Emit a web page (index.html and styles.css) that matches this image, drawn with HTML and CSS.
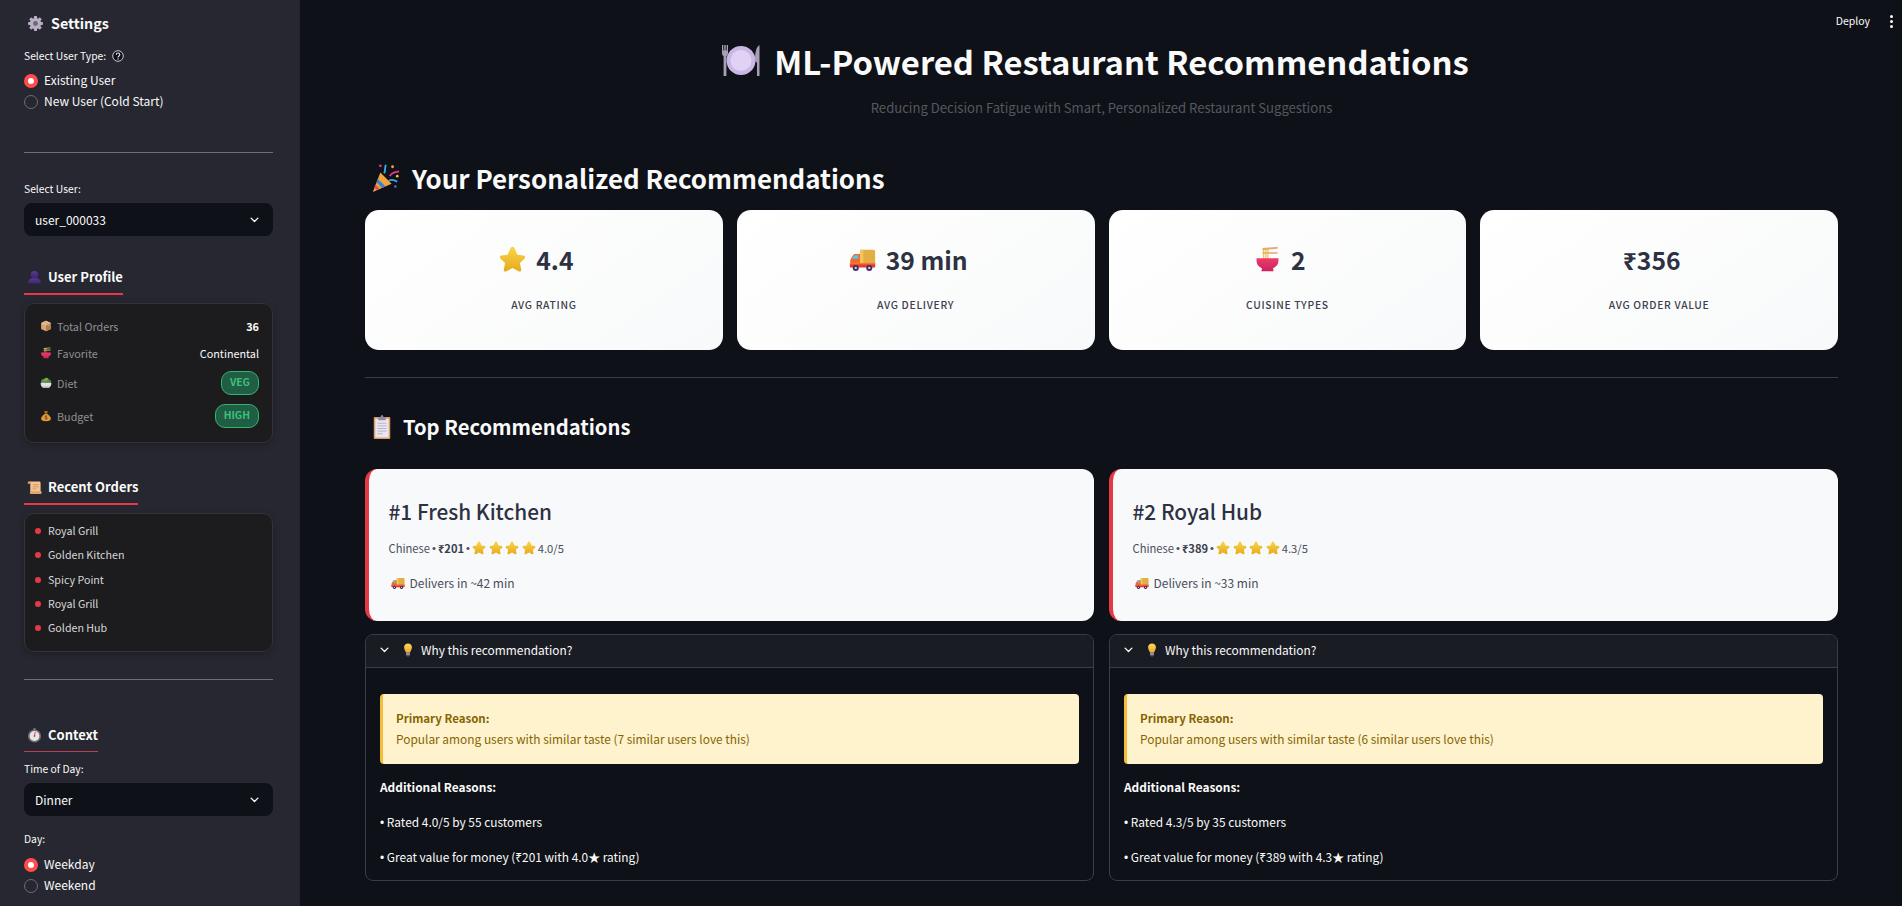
FILE: index.html
```html
<!DOCTYPE html>
<html lang="en">
<head>
<meta charset="utf-8">
<title>ML-Powered Restaurant Recommendations</title>
<link rel="stylesheet" href="styles.css">
</head>
<body>
<svg class="defs" aria-hidden="true">
  <defs>
    <linearGradient id="gStar" x1="0" y1="0" x2="0" y2="1"><stop offset="0" stop-color="#f9d648"/><stop offset="1" stop-color="#e6a91f"/></linearGradient>
    <linearGradient id="gBowl" x1="0" y1="0" x2="0" y2="1"><stop offset="0" stop-color="#ef3a6b"/><stop offset="1" stop-color="#c9245f"/></linearGradient>
    <linearGradient id="gBust" x1="0" y1="0" x2="0" y2="1"><stop offset="0" stop-color="#5b3a96"/><stop offset="1" stop-color="#3c2470"/></linearGradient>
    <linearGradient id="gBulb" x1="0" y1="0" x2="0" y2="1"><stop offset="0" stop-color="#fbd85a"/><stop offset="1" stop-color="#eda92c"/></linearGradient>
    <symbol id="i-star" viewBox="0 0 32 32"><path fill="url(#gStar)" d="M16 1C17.2 1 18.200 2 18.800 3.500L21.800 10.500L29 11.300C31 11.500 31.500 13.800 30.100 15.200L24.800 20.200L26.300 27.800C26.700 29.800 25 31 23.200 30L16 26.200L8.800 30C7 31 5.300 29.800 5.700 27.800L7.200 20.200L1.900 15.200C.5 13.800 1 11.500 3 11.300L10.200 10.500L13.200 3.500C13.800 2 14.800 1 16 1Z"/></symbol>
    <symbol id="i-truck" viewBox="0 0 32 32">
      <path fill="#e2ae45" d="M13 5.500a1 1 0 0 1 1-1h15a2 2 0 0 1 2 2V21H13Z"/>
      <path fill="#f2c65c" d="M13 5.500a1 1 0 0 1 1-1h3V21h-4Z"/>
      <path fill="#f06a2c" d="M3 13.500 6 9.500h7V21H1.500v-4Z"/>
      <path fill="#5cc2ee" d="M3.500 14.500 6.500 11H11v4H3.500Z"/>
      <rect x="1" y="20" width="30" height="5.500" rx="1" fill="#e8392f"/>
      <rect x="1" y="20" width="30" height="1.800" fill="#f5782d"/>
      <circle cx="8" cy="26" r="3.600" fill="#4a2a63"/><circle cx="8" cy="26" r="1.400" fill="#d7c7df"/>
      <circle cx="24" cy="26" r="3.600" fill="#4a2a63"/><circle cx="24" cy="26" r="1.400" fill="#d7c7df"/>
    </symbol>
    <symbol id="i-ramen" viewBox="0 0 32 32">
      <path fill="#dfae7d" d="M10 2.500 28 1v2.400L10 5Z"/>
      <path fill="#e8bd90" d="M10 7h18v2.400H10Z"/>
      <path fill="none" stroke="#e9b537" stroke-width="1.200" d="M11.500 3v12M14 3v12M16.500 3v12"/>
      <path fill="url(#gBowl)" d="M3 14.500h26v3c0 4.500-3 7.500-6.500 8.800l.7 3.700H8.800l.7-3.700C6 25 3 22 3 17.500Z"/>
    </symbol>
    <symbol id="i-gear" viewBox="0 0 32 32">
      <g fill="#b9afc6">
        <circle cx="16" cy="16" r="10.500"/>
        <rect x="13" y="2" width="6" height="28" rx="1.500"/>
        <rect x="13" y="2" width="6" height="28" rx="1.500" transform="rotate(45 16 16)"/>
        <rect x="13" y="2" width="6" height="28" rx="1.500" transform="rotate(90 16 16)"/>
        <rect x="13" y="2" width="6" height="28" rx="1.500" transform="rotate(135 16 16)"/>
      </g>
      <circle cx="16" cy="16" r="4.500" fill="#6d6678"/>
    </symbol>
    <symbol id="i-bust" viewBox="0 0 32 32">
      <circle cx="16" cy="10" r="8" fill="url(#gBust)"/>
      <path fill="url(#gBust)" d="M2 29c0-7 5-11.500 10-11.500h8c5 0 10 4.500 10 11.500Z"/>
    </symbol>
    <symbol id="i-box" viewBox="0 0 32 32">
      <path fill="#d9a676" d="M16 2 29 8v16L16 30 3 24V8Z"/>
      <path fill="#b37d50" d="M16 14 29 8v16L16 30Z"/>
      <path fill="#e8c098" d="M16 2 29 8 16 14 3 8Z"/>
      <path fill="#c9a078" d="M8 5.500 21 11.500v5l3-1.400v-5L11 4Z"/>
    </symbol>
    <symbol id="i-salad" viewBox="0 0 32 32">
      <circle cx="9" cy="11" r="6" fill="#4f9a45"/><circle cx="17" cy="8.500" r="6.500" fill="#67b04e"/><circle cx="24" cy="12" r="5.500" fill="#3f8a3f"/>
      <circle cx="14" cy="12" r="2.200" fill="#d23f3f"/><circle cx="21" cy="10" r="1.800" fill="#e05555"/>
      <path fill="#e4e0e8" d="M1.500 15h29c0 8-4 14-9 14H10.500c-5 0-9-6-9-14Z"/>
      <path fill="#b6b1bd" d="M5 24c4 2 18 2 22 0-1.800 3-3.500 5-5.500 5H10.500C8.500 29 6.800 27 5 24Z"/>
    </symbol>
    <symbol id="i-bag" viewBox="0 0 32 32">
      <path fill="#c47a2c" d="M11 2.500c2 1.200 8 1.200 10 0l-2.500 7h-5Z"/>
      <rect x="12" y="8.500" width="8" height="2.200" rx="1" fill="#8a5220"/>
      <path fill="#e29a38" d="M13 10.500h6C25 14 29 19 29 23.500c0 4.500-4 6.500-13 6.500S3 28 3 23.500C3 19 7 14 13 10.500Z"/>
      <path fill="none" stroke="#6a3d14" stroke-width="1.800" d="M19 16.500c-1-1-5.500-1.200-5.500 1.200 0 3 6 1.500 6 4.400 0 2.300-5 2.200-6.500 1M16.300 14.500v11.500"/>
    </symbol>
    <symbol id="i-scroll" viewBox="0 0 32 32">
      <path fill="#f4c592" d="M6 3h20c2 0 3 1.500 3 3.500V27H10c-2 0-3-2-3-4V6.500C7 5 6.500 3 6 3Z"/>
      <path fill="#e0a46c" d="M2 3h5c1 0 1.500 1 1.500 3v2H2c-.8-2 0-5 0-5Z"/>
      <path fill="#e0a46c" d="M7 24h24v3.500c0 1.500-1 2.500-2 2.500H9c-2 0-3-1-3-3Z"/>
      <path stroke="#d18d55" stroke-width="1.800" d="M12 10h13M12 14.500h13M12 19h8"/>
    </symbol>
    <symbol id="i-watch" viewBox="0 0 32 32">
      <rect x="13.500" y="0.500" width="5" height="4" rx="1" fill="#8d8994"/>
      <circle cx="16" cy="17" r="14" fill="#6f6c77"/>
      <circle cx="16" cy="17" r="10.500" fill="#ebe5e0"/>
      <path stroke="#d9366a" stroke-width="2" d="M16 17 17.500 8.500"/>
      <circle cx="16" cy="17" r="1.800" fill="#55525c"/>
    </symbol>
    <symbol id="i-plate" viewBox="0 0 38 32">
      <circle cx="19" cy="15.500" r="14.500" fill="#c9b8e6"/>
      <circle cx="19" cy="15.500" r="10.500" fill="#dfd2f4"/>
      <path fill="#a89fb6" d="M0 0h1.300v5.500H2.300V0H3.700v5.500H4.700V0H6v8c0 1.800-.8 2.800-1.600 3.200V31H1.600V11.200C.8 10.800 0 9.800 0 8Z"/>
      <path fill="#a89fb6" d="M37.500 0C34 2 33 8 33 15c0 1.500 1 2.500 2 2.500V31h2.500Z"/>
    </symbol>
    <symbol id="i-party" viewBox="0 0 32 32">
      <path fill="#f2a33a" d="M10 10 22 22 2 31Z"/>
      <path fill="#3f7fd0" d="M7.300 16.800 15.500 25l-3.600 1.600L5.800 20.500Z"/>
      <path fill="#e34a5a" d="M4.700 23 9 27.300 6 28.700 3.400 26Z"/>
      <path fill="none" stroke="#e8358c" stroke-width="2" d="M20 14c3-5 7-4 10-5"/>
      <path fill="none" stroke="#38a7e8" stroke-width="2" d="M14 11c2-3 0-6 2-9M19 19c3-2 6-1 9 1"/>
      <circle cx="23" cy="4" r="1.500" fill="#f2a33a"/><circle cx="10" cy="3" r="1.400" fill="#e8358c"/><circle cx="28" cy="14" r="1.400" fill="#f2c33a"/><circle cx="26" cy="25" r="1.300" fill="#3f7fd0"/>
    </symbol>
    <symbol id="i-clip" viewBox="0 0 24 32">
      <rect x="1" y="2.500" width="22" height="29.500" rx="1.500" fill="#dc9c63"/>
      <rect x="3" y="5" width="18" height="25" fill="#e9e5f2"/>
      <path fill="#8f8b9c" d="M7 3h3c0-1.500 1-3 2-3s2 1.500 2 3h3v4H7Z"/>
      <path stroke="#b3aec4" stroke-width="1.200" d="M6 11h12M6 14.500h12M6 18h12M6 21.500h12M6 25h7"/>
    </symbol>
    <symbol id="i-bulb" viewBox="0 0 20 32">
      <path fill="url(#gBulb)" d="M10 1c5 0 9 3.800 9 9 0 4.500-3.500 7.500-4.500 12h-9C4.500 17.500 1 14.500 1 10c0-5.200 4-9 9-9Z"/>
      <rect x="5.500" y="22" width="9" height="6.500" rx="1" fill="#8f8aa6"/>
      <rect x="7.500" y="28" width="5" height="3" rx="1" fill="#5a5370"/>
    </symbol>
    <symbol id="i-chev" viewBox="0 0 12 8"><path fill="none" stroke="currentColor" stroke-width="1.800" stroke-linecap="round" stroke-linejoin="round" d="M1.500 1.500 6 6l4.500-4.500"/></symbol>
  </defs>
</svg>

<div class="app">
  <aside class="sidebar">
    <h2 class="side-title"><svg class="ic-gear"><use href="#i-gear"/></svg>Settings</h2>
    <div class="label label-help">Select User Type:
      <svg class="ic-help" viewBox="0 0 12 12"><circle cx="6" cy="6" r="5.300" fill="#0e1117" stroke="#c9c9cc" stroke-width="1"/><path fill="none" stroke="#e8e8ea" stroke-width="1.100" d="M4.300 4.700c0-2.200 3.500-2.200 3.500 0 0 1.300-1.800 1.300-1.800 2.700"/><circle cx="6" cy="9" r=".7" fill="#e8e8ea"/></svg>
    </div>
    <div class="radios">
      <div class="radio on"><span class="dot"></span>Existing User</div>
      <div class="radio"><span class="dot"></span>New User (Cold Start)</div>
    </div>
    <hr class="side-hr first">
    <div class="label label-user">Select User:</div>
    <div class="select"><span>user_000033</span><svg class="ic-chev"><use href="#i-chev"/></svg></div>

    <div class="sec sec-profile"><svg class="ic-sec"><use href="#i-bust"/></svg>User Profile</div>
    <div class="panel profile">
      <div class="row"><span class="k"><svg class="ic-k"><use href="#i-box"/></svg>Total Orders</span><b class="v">36</b></div>
      <div class="row"><span class="k"><svg class="ic-k"><use href="#i-ramen"/></svg>Favorite</span><span class="v">Continental</span></div>
      <div class="row tall"><span class="k"><svg class="ic-k"><use href="#i-salad"/></svg>Diet</span><span class="badge">VEG</span></div>
      <div class="row taller"><span class="k"><svg class="ic-k"><use href="#i-bag"/></svg>Budget</span><span class="badge">HIGH</span></div>
    </div>

    <div class="sec sec-orders"><svg class="ic-sec"><use href="#i-scroll"/></svg>Recent Orders</div>
    <ul class="panel orders">
      <li>Royal Grill</li>
      <li>Golden Kitchen</li>
      <li>Spicy Point</li>
      <li>Royal Grill</li>
      <li>Golden Hub</li>
    </ul>
    <hr class="side-hr second">
    <div class="sec sec-context"><svg class="ic-sec"><use href="#i-watch"/></svg>Context</div>
    <div class="label label-time">Time of Day:</div>
    <div class="select"><span>Dinner</span><svg class="ic-chev"><use href="#i-chev"/></svg></div>
    <div class="label label-day">Day:</div>
    <div class="radios radios-day">
      <div class="radio on"><span class="dot"></span>Weekday</div>
      <div class="radio"><span class="dot"></span>Weekend</div>
    </div>
  </aside>

  <main class="main">
    <header class="topbar">
      <span class="deploy">Deploy</span>
      <span class="kebab"><i></i><i></i><i></i></span>
    </header>
    <div class="content">
      <h1 class="title"><svg class="ic-plate"><use href="#i-plate"/></svg>ML-Powered Restaurant Recommendations</h1>
      <p class="subtitle">Reducing Decision Fatigue with Smart, Personalized Restaurant Suggestions</p>
      <h2 class="h-personal"><svg class="ic-party"><use href="#i-party"/></svg>Your Personalized Recommendations</h2>

      <section class="metrics">
        <div class="metric"><div class="m-val"><svg class="ic-m"><use href="#i-star"/></svg>4.4</div><div class="m-lab">AVG RATING</div></div>
        <div class="metric"><div class="m-val"><svg class="ic-m"><use href="#i-truck"/></svg>39 min</div><div class="m-lab">AVG DELIVERY</div></div>
        <div class="metric"><div class="m-val"><svg class="ic-m"><use href="#i-ramen"/></svg>2</div><div class="m-lab">CUISINE TYPES</div></div>
        <div class="metric"><div class="m-val">₹356</div><div class="m-lab">AVG ORDER VALUE</div></div>
      </section>

      <hr class="main-hr">
      <h2 class="h-top"><svg class="ic-clip"><use href="#i-clip"/></svg>Top Recommendations</h2>

      <section class="recs">
        <article class="rec-col">
          <div class="rec">
            <h3 class="rec-name">#1 Fresh Kitchen</h3>
            <div class="rec-meta"><span>Chinese</span><span class="bu">•</span><b>₹201</b><span class="bu">•</span><span class="stars"><svg><use href="#i-star"/></svg><svg><use href="#i-star"/></svg><svg><use href="#i-star"/></svg><svg><use href="#i-star"/></svg></span><span class="score">4.0/5</span></div>
            <div class="rec-time"><svg class="ic-t"><use href="#i-truck"/></svg>Delivers in ~42 min</div>
          </div>
          <div class="exp">
            <div class="exp-head"><svg class="ic-chev"><use href="#i-chev"/></svg><svg class="ic-bulb"><use href="#i-bulb"/></svg>Why this recommendation?</div>
            <div class="exp-body">
              <div class="reason"><div class="r-h">Primary Reason:</div><div class="r-t">Popular among users with similar taste (7 similar users love this)</div></div>
              <div class="add-h">Additional Reasons:</div>
              <div class="add-1"><span class="bu2">•</span> Rated 4.0/5 by 55 customers</div>
              <div class="add-2"><span class="bu2">•</span> Great value for money (₹201 with 4.0★ rating)</div>
            </div>
          </div>
        </article>
        <article class="rec-col">
          <div class="rec">
            <h3 class="rec-name">#2 Royal Hub</h3>
            <div class="rec-meta"><span>Chinese</span><span class="bu">•</span><b>₹389</b><span class="bu">•</span><span class="stars"><svg><use href="#i-star"/></svg><svg><use href="#i-star"/></svg><svg><use href="#i-star"/></svg><svg><use href="#i-star"/></svg></span><span class="score">4.3/5</span></div>
            <div class="rec-time"><svg class="ic-t"><use href="#i-truck"/></svg>Delivers in ~33 min</div>
          </div>
          <div class="exp">
            <div class="exp-head"><svg class="ic-chev"><use href="#i-chev"/></svg><svg class="ic-bulb"><use href="#i-bulb"/></svg>Why this recommendation?</div>
            <div class="exp-body">
              <div class="reason"><div class="r-h">Primary Reason:</div><div class="r-t">Popular among users with similar taste (6 similar users love this)</div></div>
              <div class="add-h">Additional Reasons:</div>
              <div class="add-1"><span class="bu2">•</span> Rated 4.3/5 by 35 customers</div>
              <div class="add-2"><span class="bu2">•</span> Great value for money (₹389 with 4.3★ rating)</div>
            </div>
          </div>
        </article>
      </section>
    </div>
  </main>
</div>
</body>
</html>
```

FILE: styles.css
```css
* { box-sizing: border-box; }
html, body { margin: 0; height: 100%; overflow: hidden; }
body {
  background: #0e1117;
  color: #fafafa;
  font-family: "Noto Sans CJK SC", "Noto Sans", sans-serif;
  font-size: 12px;
}
.defs { display: block; width: 0; height: 0; }
.app { display: flex; height: 906px; }
h1, h2, h3, p, ul { margin: 0; padding: 0; }

/* Sidebar */
.sidebar {
  flex: 0 0 300px;
  height: 906px;
  background: #262730;
  padding: 11px 26px 0 24px;
  overflow: hidden;
  border-right: 1px solid #22232b;
}
.side-title {
  display: flex; align-items: center;
  font-size: 14.300px; line-height: 24px; font-weight: 700;
}
.ic-gear { width: 17px; height: 17px; margin: 0 7px 0 3px; }
.label { font-size: 10.300px; line-height: 18px; color: #fafafa; }
.label-help { display: flex; align-items: center; margin-top: 12px; }
.ic-help { width: 12px; height: 12px; margin-left: 6px; }
.label-user { margin-top: 27px; }
.label-time { margin-top: 8px; }
.label-day { margin-top: 14px; }
.radios { margin-top: 5px; }
.radios-day { margin-top: 6px; }
.radio { display: flex; align-items: center; height: 21px; padding-bottom: 2px; font-size: 12px; }
.dot {
  width: 14px; height: 14px; border-radius: 50%;
  border: 1px solid #6c6d75; margin: 2px 6px 0 0; background: #262730;
}
.radio.on .dot { border: 4px solid #ff4b4b; background: #fff; }
.side-hr { border: 0; height: 1px; background: #6f7076; margin: 0; }
.side-hr.first { margin-top: 40px; }
.side-hr.second { margin-top: 27px; }
.select {
  display: flex; align-items: center; justify-content: space-between;
  height: 33px; margin-top: 5px; padding: 0 14px 0 11px;
  background: #0e1117; border-radius: 8px; font-size: 12px;
}
.ic-chev { width: 9px; height: 6px; color: #fafafa; }
.sec {
  display: flex; align-items: center; width: max-content;
  font-size: 13px; font-weight: 700; line-height: 24px;
  padding-bottom: 4px; border-bottom: 2px solid #e63946;
}
.sec-profile { margin-top: 29px; }
.sec-orders { margin-top: 32px; }
.sec-context { margin-top: 43px; border-bottom: 1px solid #b9404e; margin-bottom: 1px; }
.ic-sec { width: 15px; height: 15px; margin: 0 6px 0 3px; }
.panel {
  background: #1c1c1e; border: 1px solid #333338; border-radius: 10px;
  margin-top: 8px; box-shadow: 0 2px 6px rgba(0,0,0,.25);
}
.profile { padding: 9px 13px 10px 15px; height: 140px; }
.row { display: flex; align-items: center; justify-content: space-between; height: 27px; padding-bottom: 2px; font-size: 10.800px; }
.row.tall { height: 32px; padding-bottom: 0; }
.row.taller { height: 33px; padding-bottom: 0; }
.k { display: flex; align-items: center; color: #8f8f93; }
.ic-k { width: 12px; height: 12px; margin-right: 5px; }
.v { color: #fafafa; }
.badge {
  display: inline-block; height: 24px; line-height: 20px; padding: 0 8px;
  border: 1.500px solid #34b36f; border-radius: 10px;
  background: #1f5d44; color: #3fc07a; font-size: 10.300px; font-weight: 700;
}
.orders { list-style: none; padding: 5px 0 11px 23px; height: 139px; }
.orders li {
  position: relative; height: 24.250px; line-height: 24.250px; font-size: 10.700px; color: #d8d8da;
}
.orders li::before {
  content: ""; position: absolute; left: -13px; top: 9px;
  width: 6px; height: 6px; border-radius: 50%; background: #e63946;
}

/* Main */
.main { flex: 1; min-width: 0; background: #0e1117; }
.topbar {
  display: flex; justify-content: flex-end; align-items: center;
  height: 37px; padding: 12px 9px 7px 0;
}
.deploy { font-size: 10.500px; line-height: 18px; margin-right: 20px; }
.kebab { display: flex; flex-direction: column; gap: 2px; }
.kebab i { width: 3px; height: 3px; border-radius: 50%; background: #fafafa; display: block; }
.content { padding: 0 64px 0 65px; }
.title {
  display: flex; align-items: center; justify-content: center;
  height: 50px; padding: 0 12px 2px 0;
  font-size: 32.800px; line-height: 48px; font-weight: 700;
}
.ic-plate { width: 38px; height: 32px; margin-right: 14px; }
.subtitle { margin-top: 10px; text-align: center; font-size: 13.100px; line-height: 22px; color: #55585e; }
.h-personal {
  display: flex; align-items: center; height: 40px; margin-top: 40px; padding-bottom: 2px;
  font-size: 25.900px; line-height: 38px; font-weight: 600;
}
.ic-party { width: 30px; height: 30px; margin: 0 11px 0 6px; }
.metrics { display: grid; grid-template-columns: repeat(4, 1fr); gap: 14px; margin-top: 11px; }
.metric {
  height: 140px; padding-top: 29px; border-radius: 14px; text-align: center;
  background: linear-gradient(145deg, #ffffff 0%, #f8f9fa 100%);
}
.m-val {
  display: flex; align-items: center; justify-content: center;
  padding-right: 15px;
  font-size: 24.700px; line-height: 40px; font-weight: 700; color: #2d3142;
}
.ic-m { width: 27px; height: 27px; margin-right: 10px; }
.m-lab { margin-top: 18px; font-size: 10.300px; line-height: 16px; font-weight: 500; letter-spacing: .7px; color: #3c3f4d; }
.main-hr { border: 0; height: 1px; background: #3b3d42; margin: 27px 0 0; }
.h-top {
  display: flex; align-items: center; margin-top: 32px;
  font-size: 20.200px; line-height: 34px; font-weight: 600;
}
.ic-clip { width: 20px; height: 24px; margin: 0 11px 0 7px; }
.recs { display: grid; grid-template-columns: 1fr 1fr; gap: 15px; margin-top: 25px; }
.rec-col { display: flex; flex-direction: column; gap: 13px; }
.rec {
  height: 152px; background: #f8f9fb; border-left: 4px solid #e63946; border-radius: 12px;
  padding: 26px 20px 0 19.500px; color: #2d3142;
}
.rec-name { font-size: 20.800px; line-height: 32px; font-weight: 500; color: #2d3142; }
.rec-meta { display: flex; align-items: center; margin-top: 11px; font-size: 11.200px; line-height: 20px; color: #4a4d5a; }
.rec-meta b { color: #3a3d4a; font-weight: 700; }
.bu { font-family: "Liberation Sans", sans-serif; margin: 0 2px; }
.bu2 { font-family: "Liberation Sans", sans-serif; }
.stars { display: inline-flex; gap: 2.600px; }
.stars svg { width: 14px; height: 14px; display: block; }
.score { margin-left: 2px; }
.rec-time { display: flex; align-items: center; margin-top: 14px; font-size: 12px; line-height: 22px; color: #4a4d5a; }
.ic-t { width: 14px; height: 14px; margin: 0 5px 0 2px; }
.exp { height: 247px; border: 1px solid #3a3d44; border-radius: 8px; overflow: hidden; }
.exp-head {
  display: flex; align-items: center; height: 33px; padding: 0 0 3px 14px;
  background: #1a1c24; border-bottom: 1px solid #3a3d44; font-size: 11.900px;
}
.exp-head .ic-chev { width: 9px; height: 6px; margin-right: 14px; }
.ic-bulb { width: 10px; height: 14px; margin-right: 8px; }
.exp-body { padding: 26px 14px 0 14px; font-size: 11.900px; }
.reason {
  height: 70px; padding: 14px 13px 0; background: #fff3cd;
  border-left: 3px solid #f5bd3c; border-radius: 4px; color: #856404;
}
.r-h { font-weight: 600; font-size: 11.500px; line-height: 20px; }
.r-t { line-height: 20px; margin-top: 1px; }
.add-h { margin-top: 13px; line-height: 20px; font-weight: 700; }
.add-1 { margin-top: 15px; line-height: 20px; }
.add-2 { margin-top: 14px; line-height: 20px; }
```
